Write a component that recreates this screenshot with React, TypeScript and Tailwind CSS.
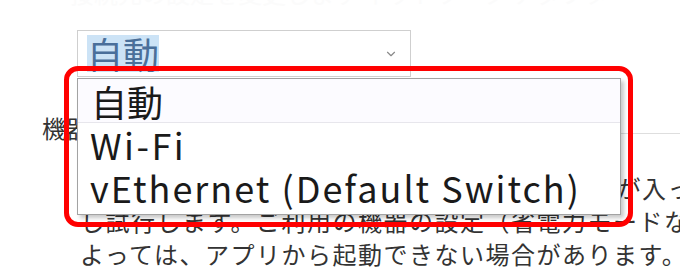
import { ChevronDown } from "lucide-react";

const jp = "font-['Noto_Sans_CJK_JP','Noto_Sans',sans-serif]";

export default function App() {
  return (
    <div className={`relative w-[680px] h-[270px] overflow-hidden bg-white text-[#333333] ${jp}`}>
      {/* Background page */}
      <div className="flex flex-col">
        <div className="h-[30px] overflow-hidden">
          <div className="-mt-[20px] pl-[70px] text-[24px] leading-[26px] text-[#fbfbfb] whitespace-nowrap">
            接続先の設定を変更します ネットワーク アダプター
          </div>
        </div>

        {/* Combobox */}
        <div className="ml-[77px] w-[334px] h-[47px] border border-[#cfcfcf] flex items-center justify-between pl-[9px] pr-[12px]">
          <span className="text-[36px] leading-[37px] bg-[#cce3f6] text-[#4a6f9a]">自動</span>
          <ChevronDown className="w-[14px] h-[14px] text-[#8a8a8a]" strokeWidth={2} />
        </div>

        {/* Row label */}
        <div className="mt-[34px] flex items-start h-[33px] text-[24px] leading-[33px]">
          <span className="pl-[42px] pr-[8px] whitespace-nowrap">機器の接続</span>
          <div className="flex-1 h-[23px] border-b border-[#dedede]" />
        </div>

        {/* Paragraph */}
        <div className="mt-[27px] pl-[80px] text-[24px] leading-[33px] tracking-[1.5px] whitespace-nowrap">
          <div>
            <span className="tracking-[-2px]">PC</span>の設定を確認し、各ネットワークアダプターが入っている順に接続
          </div>
          <div>し試行します。ご利用の機器の設定（省電力モードなど）に</div>
          <div>よっては、アプリから起動できない場合があります。</div>
        </div>
      </div>

      {/* Open dropdown list */}
      <div className="absolute left-[77px] top-[78px] w-[544px] h-[137px] border border-[#a3a3a3] bg-white shadow-[3px_3px_4px_rgba(0,0,0,0.22)] text-[#1a1a1a] text-[36px]">
        <div className="h-[44px] leading-[44px] pl-[13px] bg-[#fcfbff] border-b border-[#e7e6ec]">自動</div>
        <div className="h-[43px] leading-[43px] pl-[12px] tracking-[2.5px]">Wi-Fi</div>
        <div className="h-[44px] leading-[42px] pl-[12px] tracking-[2px] whitespace-nowrap">vEthernet (Default Switch)</div>
      </div>

      {/* Red highlight frame */}
      <div className="absolute left-[64px] top-[66px] w-[569px] h-[161px] border-[5px] border-[#ff0000] rounded-[14px]" />
    </div>
  );
}
